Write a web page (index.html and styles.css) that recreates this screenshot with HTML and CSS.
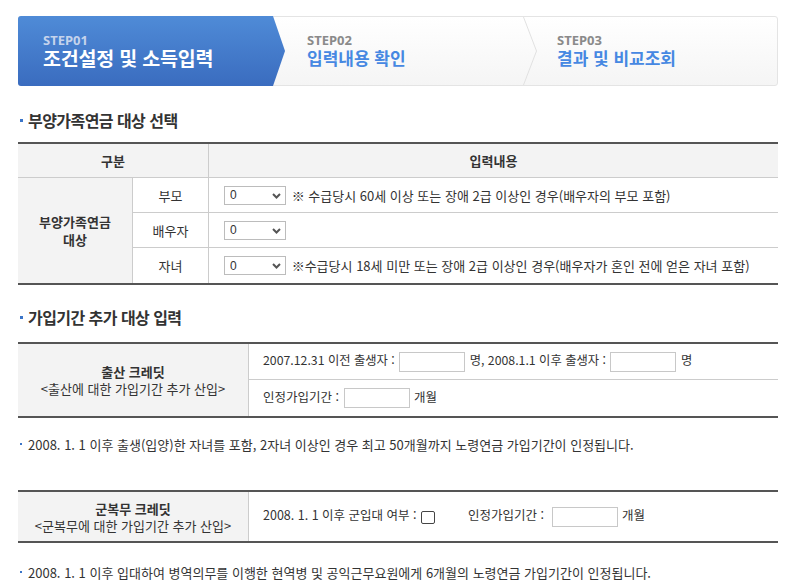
FILE: index.html
```html
<!DOCTYPE html>
<html lang="ko">
<head>
<meta charset="utf-8">
<title>국민연금 예상연금 조회</title>
<link rel="stylesheet" href="styles.css">
</head>
<body>
<div class="page">
  <div class="steps">
    <div class="step step-on">
      <span class="step-no">STEP01</span>
      <span class="step-name">조건설정 및 소득입력</span>
    </div>
    <div class="step step-two">
      <span class="step-no">STEP02</span>
      <span class="step-name">입력내용 확인</span>
    </div>
    <svg class="step-sep" width="14" height="68" viewBox="0 0 14 68"><polyline points="0.5,0 13.5,34 0.5,68" fill="none" stroke="#e1e1e1" stroke-width="1"/></svg>
    <div class="step step-three">
      <span class="step-no">STEP03</span>
      <span class="step-name">결과 및 비교조회</span>
    </div>
  </div>

  <h3 class="sec-title sec-first">부양가족연금 대상 선택</h3>
  <table class="tbl tbl-dep">
    <colgroup><col class="c-a"><col class="c-b"><col></colgroup>
    <tr class="head">
      <th colspan="2">구분</th>
      <th class="bl">입력내용</th>
    </tr>
    <tr>
      <th rowspan="3" class="side">부양가족연금<br>대상</th>
      <td class="bl center">부모</td>
      <td class="bl field">
        <span class="sel"><select><option>0</option></select><svg class="chev" width="9" height="6" viewBox="0 0 9 6"><polyline points="1,1 4.5,4.5 8,1" fill="none" stroke="#555" stroke-width="2"/></svg></span>
        <span class="txt">※ 수급당시 60세 이상 또는 장애 2급 이상인 경우(배우자의 부모 포함)</span>
      </td>
    </tr>
    <tr>
      <td class="bl center">배우자</td>
      <td class="bl field">
        <span class="sel"><select><option>0</option></select><svg class="chev" width="9" height="6" viewBox="0 0 9 6"><polyline points="1,1 4.5,4.5 8,1" fill="none" stroke="#555" stroke-width="2"/></svg></span>
      </td>
    </tr>
    <tr class="last">
      <td class="bl center">자녀</td>
      <td class="bl field">
        <span class="sel"><select><option>0</option></select><svg class="chev" width="9" height="6" viewBox="0 0 9 6"><polyline points="1,1 4.5,4.5 8,1" fill="none" stroke="#555" stroke-width="2"/></svg></span>
        <span class="txt">※수급당시 18세 미만 또는 장애 2급 이상인 경우(배우자가 혼인 전에 얻은 자녀 포함)</span>
      </td>
    </tr>
  </table>

  <h3 class="sec-title sec-second">가입기간 추가 대상 입력</h3>
  <table class="tbl tbl-credit">
    <colgroup><col class="c-side"><col></colgroup>
    <tr>
      <th rowspan="2" class="side"><strong>출산 크레딧</strong><br>&lt;출산에 대한 가입기간 추가 산입&gt;</th>
      <td class="bl field2 tight">2007.12.31 이전 출생자 : <input type="text" class="box"> 명, 2008.1.1 이후 출생자 : <input type="text" class="box"> 명</td>
    </tr>
    <tr class="last">
      <td class="bl field2">인정가입기간 : <input type="text" class="box"> 개월</td>
    </tr>
  </table>
  <p class="note note-one">2008. 1. 1 이후 출생(입양)한 자녀를 포함, 2자녀 이상인 경우 최고 50개월까지 노령연금 가입기간이 인정됩니다.</p>

  <table class="tbl tbl-army">
    <colgroup><col class="c-side"><col></colgroup>
    <tr class="last">
      <th class="side"><strong>군복무 크레딧</strong><br>&lt;군복무에 대한 가입기간 추가 산입&gt;</th>
      <td class="bl field2">2008. 1. 1 이후 군입대 여부 : <input type="checkbox" class="chk"><span class="gap">인정가입기간 : </span><input type="text" class="box box-wide"> 개월</td>
    </tr>
  </table>
  <p class="note note-two">2008. 1. 1 이후 입대하여 병역의무를 이행한 현역병 및 공익근무요원에게 6개월의 노령연금 가입기간이 인정됩니다.</p>
</div>
</body>
</html>
```

FILE: styles.css
```css
* { box-sizing: border-box; }

html, body { margin: 0; padding: 0; background: #fff; }

body {
  font-family: "Noto Sans CJK KR", "Noto Sans", sans-serif;
  font-size: 13px;
  color: #333;
}

.page {
  width: 778px;
  padding: 16px 0 0 18px;
}

/* steps bar */
.steps {
  display: flex;
  height: 70px;
  border: 1px solid #e4e4e4;
  border-radius: 3px;
  background: linear-gradient(#ffffff, #f5f5f5);
}

.step {
  display: flex;
  flex-direction: column;
  padding-top: 16px;
}

.step-no {
  font-family: "Noto Sans", sans-serif;
  font-weight: 700;
  font-size: 13px;
  line-height: 14px;
  color: #8a8a8a;
}

.step-name {
  font-family: "Noto Sans CJK KR", sans-serif;
  font-weight: 700;
  font-size: 17px;
  line-height: 22px;
  color: #4688e2;
}

.step-on {
  width: 267px;
  margin: -1px 0 -1px -1px;
  padding: 17px 0 0 25px;
  border-radius: 3px 0 0 3px;
  background: linear-gradient(#4f8bd7, #3a6cbf);
  clip-path: polygon(0 0, 255px 0, 100% 50%, 255px 100%, 0 100%);
}

.step-on .step-no { color: #c5d3ec; }
.step-on .step-name {
  color: #fff;
  font-size: 19.5px;
  letter-spacing: -0.2px;
}

.step-two {
  width: 238px;
  padding-left: 22px;
}

.step-sep { flex: none; display: block; }

.step-three { padding-left: 20px; }

/* section titles */
.sec-title {
  display: flex;
  align-items: center;
  margin: 0;
  padding-left: 2px;
  height: 20px;
  font-size: 16px;
  font-weight: 700;
  letter-spacing: -0.55px;
  color: #333;
}

.sec-title::before {
  content: "";
  width: 3px;
  height: 3px;
  margin-right: 5px;
  background: #3b75c8;
}

.sec-first { margin-top: 24px; }
.sec-second { margin-top: 22px; }

/* tables */
.tbl {
  width: 760px;
  border-collapse: separate;
  border-spacing: 0;
  border-top: 2px solid #555;
  border-bottom: 2px solid #555;
  table-layout: fixed;
}

.tbl-dep { margin-top: 12px; }
.tbl-credit { margin-top: 15px; }
.tbl-army { margin-top: 36px; }

.c-a { width: 114px; }
.c-b { width: 76px; }
.c-side { width: 230px; }

.tbl th, .tbl td {
  padding: 0;
  font-size: 13px;
  line-height: 17px;
  font-weight: 400;
  color: #333;
  border-bottom: 1px solid #ccc;
  vertical-align: middle;
}

.tbl .head th {
  height: 34px;
  background: #f3f3f3;
  font-weight: 700;
  text-align: center;
}

.tbl-dep td { height: 35px; }
.tbl tr.last td, .tbl tr.last th { border-bottom: 0; }
.tbl th.side { border-bottom: 0; }

.bl { border-left: 1px solid #ccc; }

.side {
  background: #f3f3f3;
  text-align: center;
  font-weight: 700;
}

.tbl-dep .side { font-weight: 700; line-height: 18px; }

.tbl-credit .side,
.tbl-army .side { font-weight: 400; }

.side strong { font-weight: 700; }

.center { text-align: center; }

.field { padding-left: 15px !important; }
.tbl .field2 {
  padding-left: 14px;
  font-size: 12.5px;
}

.tbl .tight { font-size: 12.3px; }

.tbl-credit td { height: 36px; }
.tbl-army td, .tbl-army th { height: 49px; }

/* form controls */
.sel {
  position: relative;
  display: inline-block;
  vertical-align: middle;
}

.sel select {
  appearance: none;
  -webkit-appearance: none;
  display: block;
  width: 62px;
  height: 19px;
  margin: 0;
  padding: 0 0 0 5px;
  border: 1px solid #bcbcbc;
  border-radius: 0;
  background: #fff;
  font-family: "Liberation Sans", sans-serif;
  font-size: 12px;
  color: #333;
}

.chev {
  position: absolute;
  right: 5px;
  top: 7px;
  pointer-events: none;
}

.txt { margin-left: 2px; vertical-align: middle; }

.box {
  width: 66px;
  height: 20px;
  margin: 0 1px;
  padding: 0;
  border: 1px solid #c8c8c8;
  vertical-align: middle;
}

.box-wide { margin-left: 4px; }

.chk {
  appearance: none;
  -webkit-appearance: none;
  width: 14px;
  height: 13px;
  margin: 0 0 0 1px;
  border: 1px solid #444;
  border-radius: 2px;
  vertical-align: -4px;
  background: #fff;
}

.gap { margin-left: 33px; }

/* notes */
.note {
  display: flex;
  align-items: center;
  margin: 0;
  padding-left: 2px;
  height: 20px;
  font-size: 13px;
  color: #333;
}

.note::before {
  content: "";
  flex: none;
  width: 2px;
  height: 2px;
  margin-right: 6px;
  background: #3b75c8;
}

.note-one { margin-top: 16px; }
.note-two { margin-top: 19px; }
```
